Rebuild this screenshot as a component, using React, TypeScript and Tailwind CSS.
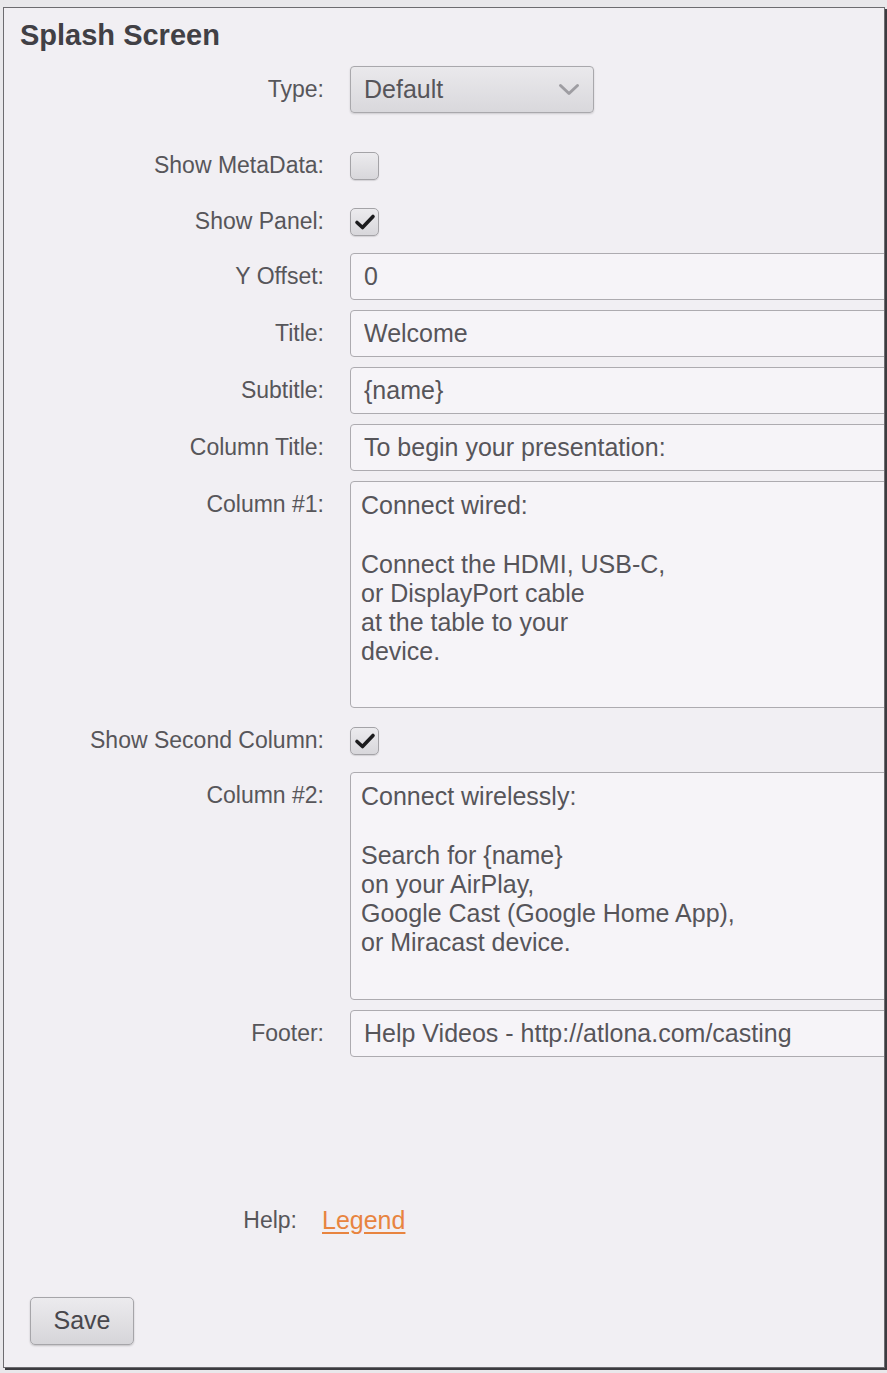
import type { ReactNode } from "react";

function Label({ children, h = 47 }: { children: ReactNode; h?: number }) {
  return (
    <div
      className={
        "w-[320px] shrink-0 text-right text-[23px] text-[#57565a] " +
        (h === 45 ? "leading-[45px]" : "leading-[47px]")
      }
    >
      {children}
    </div>
  );
}

function TextInput({ value }: { value: string }) {
  return (
    <input
      readOnly
      defaultValue={value}
      className="ml-[26px] h-[47px] w-[600px] shrink-0 rounded-[4px] border border-[#adabb0] bg-[#f6f4f8] pl-[13px] text-[25px] text-[#56555a] outline-none"
    />
  );
}

function TextArea({ value, h }: { value: string; h: string }) {
  return (
    <textarea
      readOnly
      defaultValue={value}
      className={
        "ml-[26px] w-[600px] shrink-0 resize-none overflow-hidden rounded-[4px] border border-[#adabb0] bg-[#f6f4f8] pl-[10px] pt-[9px] text-[25px] leading-[29.3px] text-[#56555a] outline-none " +
        h
      }
    />
  );
}

function Checkbox({ checked }: { checked?: boolean }) {
  return (
    <div className="ml-[26px] flex h-[28px] w-[29px] items-center justify-center rounded-[5px] border border-[#a4a3a7] bg-gradient-to-b from-[#ecebee] to-[#d8d7db] shadow-[0_1px_1px_rgba(0,0,0,0.12)]">
      {checked && (
        <svg width="22" height="18" viewBox="0 0 22 18" fill="none">
          <path
            d="M3 9.5 L8.5 14.5 L19 3.5"
            stroke="#1c1c1e"
            strokeWidth="3.6"
            strokeLinecap="round"
            strokeLinejoin="round"
          />
        </svg>
      )}
    </div>
  );
}

export default function App() {
  return (
    <div className="h-[1373px] w-[887px] overflow-hidden bg-[#e9e8eb] pl-[3px] pt-[7px] font-['Liberation_Sans']">
      <div className="flex h-[1361px] w-[882px] flex-col overflow-hidden border border-[#6d6c70] bg-[#f1eff3] shadow-[2px_2px_0_#3c3b3f]">
        <h1 className="ml-[16px] mt-[11px] h-[32px] text-[29px] font-bold leading-[32px] text-[#414045]">
          Splash Screen
        </h1>

        <div className="mt-[15px] flex items-center">
          <Label>Type:</Label>
          <div className="ml-[26px] flex h-[47px] w-[244px] items-center justify-between rounded-[4px] border border-[#a9a8ac] bg-gradient-to-b from-[#eae9ec] to-[#d9d8dc] pl-[13px] pr-[13px] shadow-[0_1px_2px_rgba(0,0,0,0.15)]">
            <span className="text-[25px] text-[#56555a]">Default</span>
            <svg width="22" height="13" viewBox="0 0 22 13" fill="none">
              <path
                d="M2.5 2.5 L11 10.5 L19.5 2.5"
                stroke="#9e9da2"
                strokeWidth="3"
                strokeLinecap="round"
                strokeLinejoin="round"
              />
            </svg>
          </div>
        </div>

        <div className="mt-[30px] flex h-[45px] items-center">
          <Label h={45}>Show MetaData:</Label>
          <Checkbox />
        </div>

        <div className="mt-[11px] flex h-[45px] items-center">
          <Label h={45}>Show Panel:</Label>
          <Checkbox checked />
        </div>

        <div className="mt-[9px] flex">
          <Label>Y Offset:</Label>
          <TextInput value="0" />
        </div>

        <div className="mt-[10px] flex">
          <Label>Title:</Label>
          <TextInput value="Welcome" />
        </div>

        <div className="mt-[10px] flex">
          <Label>Subtitle:</Label>
          <TextInput value="{name}" />
        </div>

        <div className="mt-[10px] flex">
          <Label>Column Title:</Label>
          <TextInput value="To begin your presentation:" />
        </div>

        <div className="mt-[10px] flex">
          <Label>Column #1:</Label>
          <TextArea
            h="h-[227px]"
            value={"Connect wired:\n\nConnect the HDMI, USB-C,\nor DisplayPort cable\nat the table to your\ndevice."}
          />
        </div>

        <div className="mt-[10px] flex h-[45px] items-center">
          <Label h={45}>Show Second Column:</Label>
          <Checkbox checked />
        </div>

        <div className="mt-[9px] flex">
          <Label>Column #2:</Label>
          <TextArea
            h="h-[228px]"
            value={"Connect wirelessly:\n\nSearch for {name}\non your AirPlay,\nGoogle Cast (Google Home App),\nor Miracast device."}
          />
        </div>

        <div className="mt-[10px] flex">
          <Label>Footer:</Label>
          <TextInput value="Help Videos - http://atlona.com/casting" />
        </div>

        <div className="mt-[140px] flex h-[47px] items-center">
          <div className="w-[293px] shrink-0 text-right text-[23px] text-[#57565a]">Help:</div>
          <a className="ml-[25px] text-[25px] text-[#e8843f] underline underline-offset-[3px]">Legend</a>
        </div>

        <div className="ml-[26px] mt-[53px]">
          <button className="h-[48px] w-[104px] rounded-[5px] border border-[#a6a5a9] bg-gradient-to-b from-[#ecebee] to-[#d6d5d9] text-[25px] text-[#48474c] shadow-[0_1px_2px_rgba(0,0,0,0.2)]">
            Save
          </button>
        </div>
      </div>
    </div>
  );
}
